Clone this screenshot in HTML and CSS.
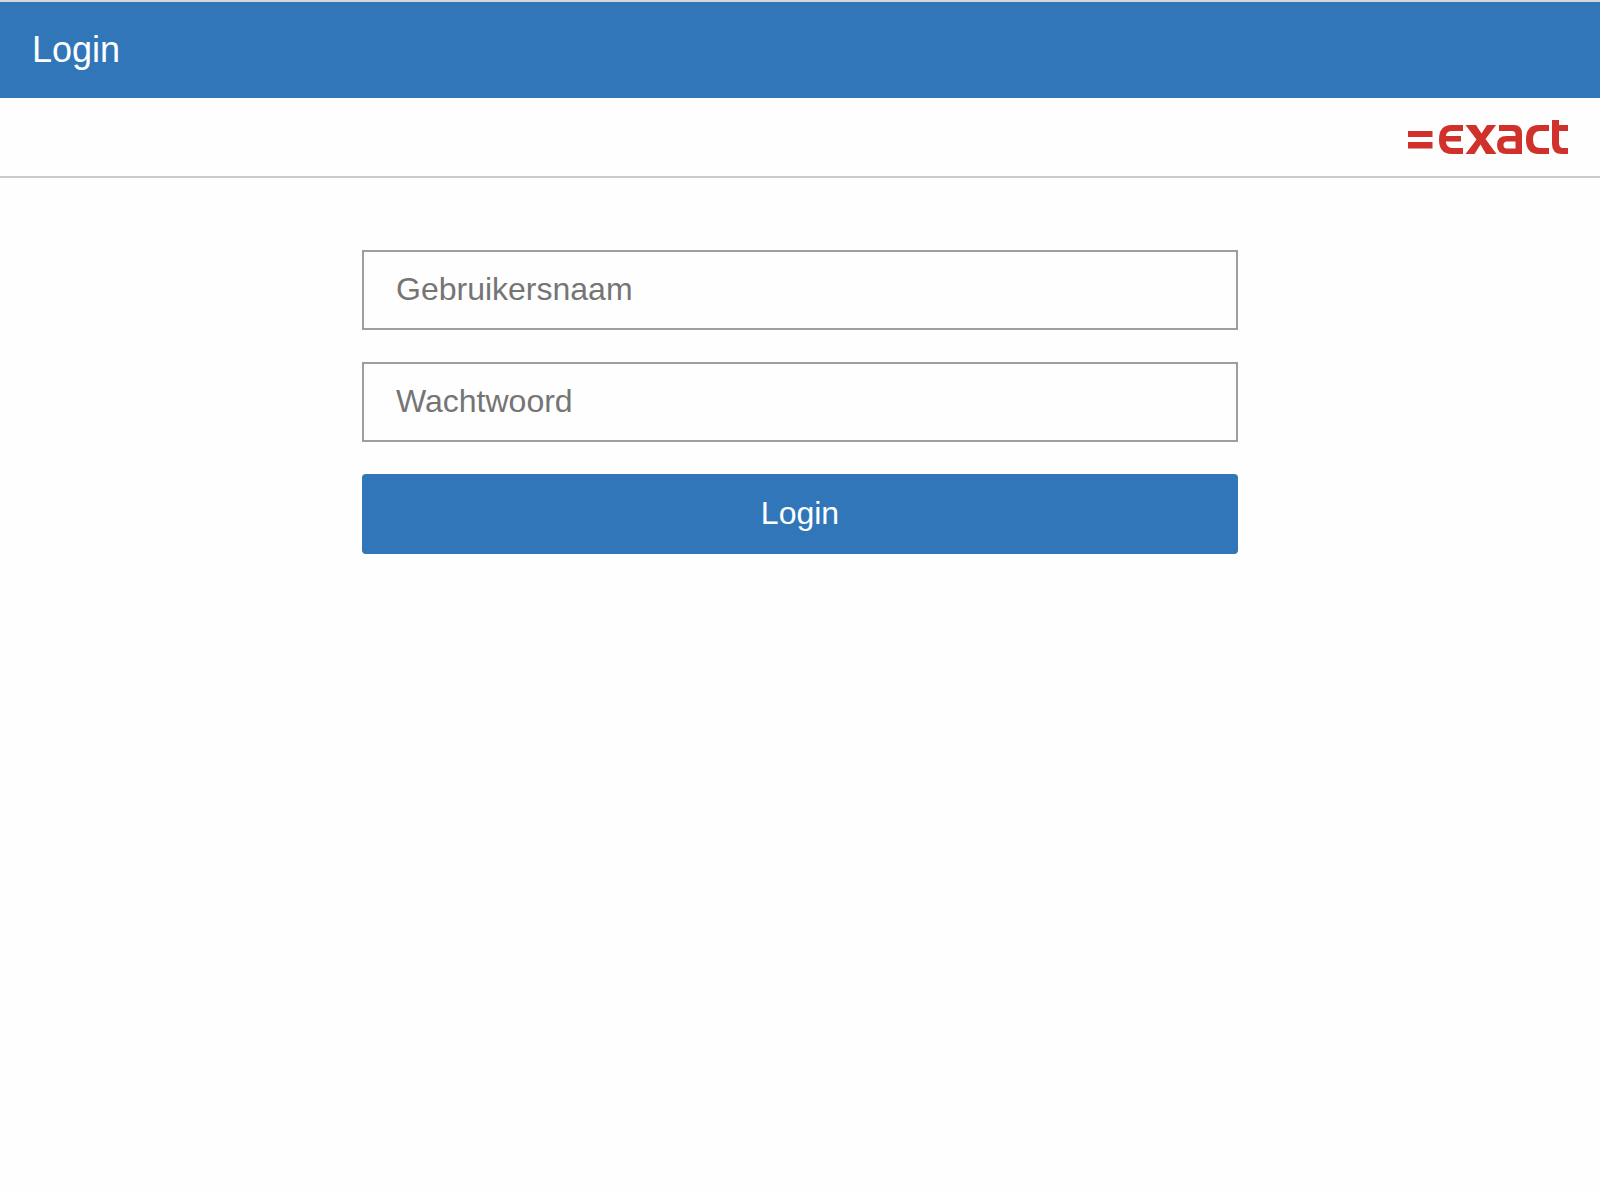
FILE: index.html
```html
<!DOCTYPE html>
<html lang="nl">
<head>
<meta charset="utf-8">
<meta name="viewport" content="width=device-width, initial-scale=1">
<title>Login</title>
<link rel="stylesheet" href="styles.css">
</head>
<body>
<header class="topbar">
  <h1 class="topbar-title">Login</h1>
</header>
<div class="brand">
  <svg class="brand-logo" viewBox="0 0 160 34" role="img" aria-label="exact">
    <path d="M0 11h24.500v6H0zM0 22h24.500v6.500H0z"/>
    <path d="M55 5v6H44q-5.500 0-6.200 5H53v5.500H37.800q.7 6.500 6.200 6.500h11v6H43.500Q31 34 31 19.500T43.500 5z"/>
    <path d="M57.500 5h10.500l5.500 8.500L79 5h9L77.500 19 88.500 34H78l-5.500-9.500L66.500 34H57.500L68.500 19.500z"/>
    <path d="M91 5h15q8 0 8 8.500V34H98.500q-9.500 0-9.500-9t9.500-9h9v-1.500q0-3.500-3.500-3.500H91zM107.500 21.500h-8.500q-3.500 0-3.500 3.500t3.500 3.500h8.500z"/>
    <path d="M141 5v6h-9q-7 0-7 8.500t7 8.500h9v6h-10.500Q118 34 118 19.500T130.500 5z"/>
    <path d="M144 0h7v5h9v6h-9v12q0 5 4 5h5v6h-6q-10 0-10-10z"/>
  </svg>
</div>
<main class="content">
  <form class="login-form">
    <input class="field" type="text" placeholder="Gebruikersnaam" aria-label="Gebruikersnaam" autocomplete="username">
    <input class="field" type="password" placeholder="Wachtwoord" aria-label="Wachtwoord" autocomplete="current-password">
    <button class="submit" type="submit">Login</button>
  </form>
</main>
</body>
</html>
```
FILE: styles.css
```css
* {
  box-sizing: border-box;
}

body {
  margin: 0;
  background: #fefefe;
  font-family: "Liberation Sans", Arial, sans-serif;
  font-size: 32px;
}

.topbar {
  display: flex;
  align-items: center;
  min-height: 98px;
  padding: 0 32px;
  border-top: 2px solid #d5d9df;
  background: #3076b9;
  color: #fff;
}

.topbar-title {
  margin: 0;
  font-size: 36px;
  font-weight: 400;
  line-height: 40px;
}

.brand {
  display: flex;
  justify-content: flex-end;
  padding: 22px 32px;
  border-bottom: 2px solid #cbcbcb;
}

.brand-logo {
  width: 160px;
  height: 34px;
  fill: #d0312a;
}

.content {
  padding: 72px 32px;
}

.login-form {
  display: grid;
  gap: 32px;
  max-width: 876px;
  margin: 0 auto;
}

.field,
.submit {
  width: 100%;
  height: 80px;
  padding: 0 32px 2px;
  font: inherit;
}

.field {
  border: 2px solid #9e9e9e;
  border-radius: 0;
  background: #fefefe;
  color: #333;
}

.field::placeholder {
  color: #757575;
  opacity: 1;
}

.submit {
  border: 0;
  border-radius: 4px;
  background: #3076b9;
  color: #fff;
  cursor: pointer;
}
```
